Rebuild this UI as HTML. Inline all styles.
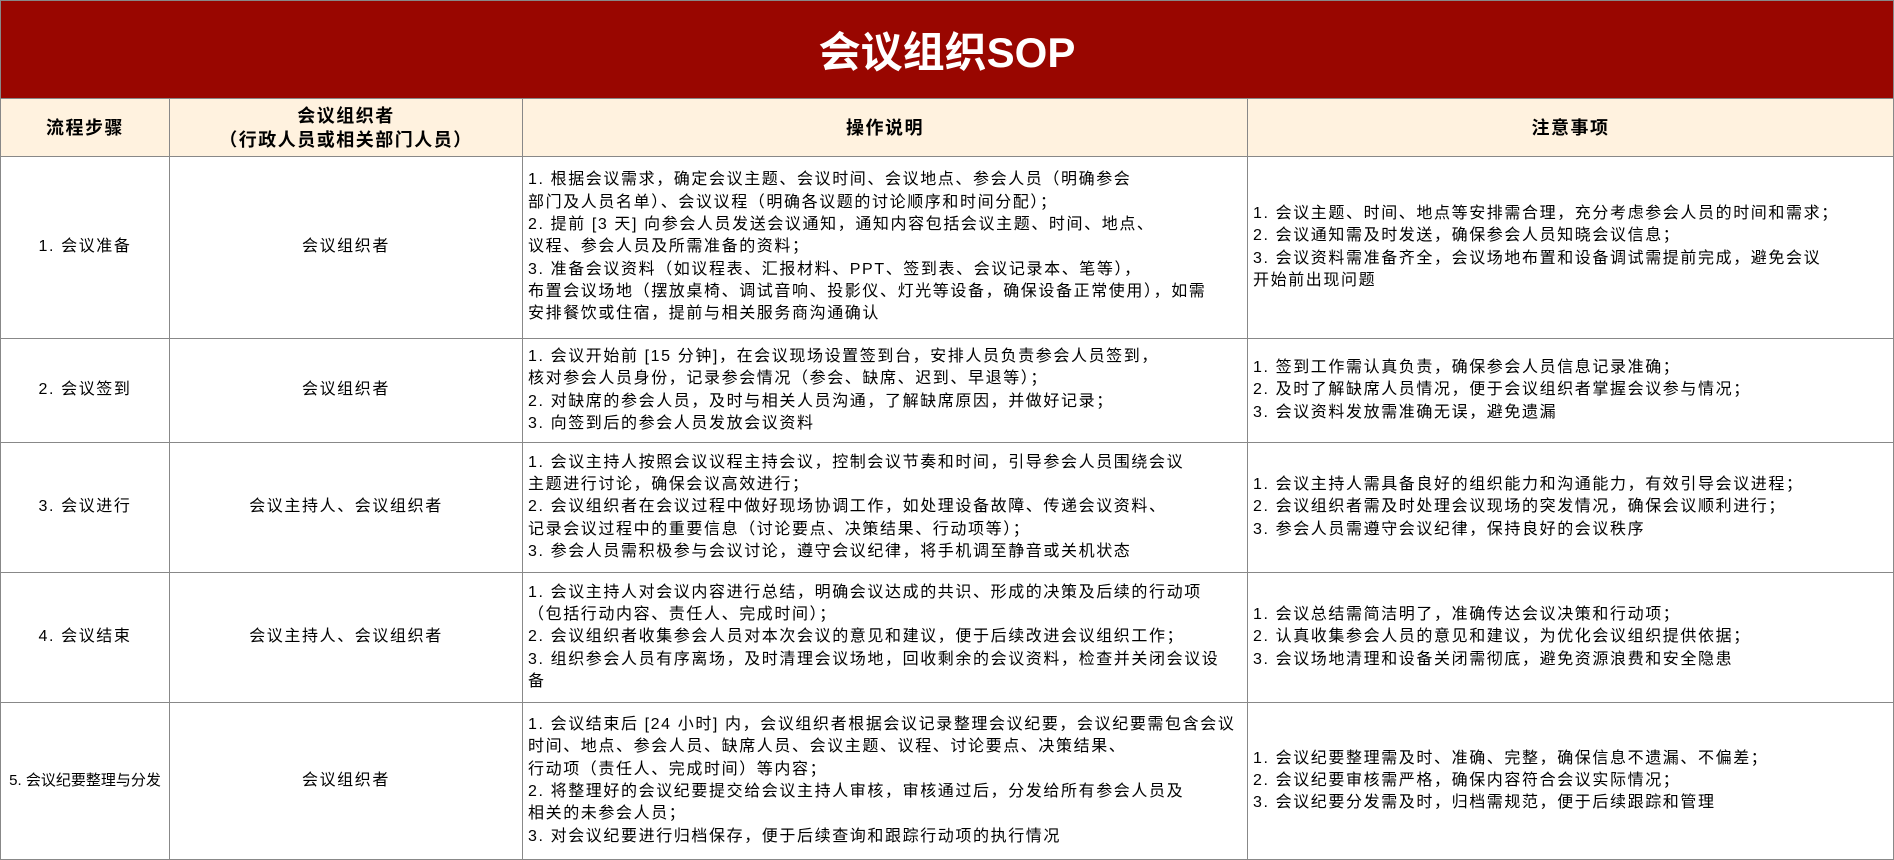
<!DOCTYPE html>
<html><head><meta charset="utf-8"><style>
*{margin:0;padding:0;box-sizing:border-box}
body{width:1894px;height:860px;background:#fff;font-family:"Liberation Sans","Noto Sans CJK SC",sans-serif;position:relative;overflow:hidden;color:#000}
.title{position:absolute;left:0;top:0;width:1894px;height:99px;background:#990600;color:#fff;font-weight:bold;font-size:42px;display:flex;align-items:center;justify-content:center;border:1px solid #888}
.c{position:absolute;border-right:1.5px solid #888;border-bottom:1.5px solid #888;display:flex;align-items:center;font-size:16px;letter-spacing:1.6px;line-height:22.3px;white-space:nowrap}
.ctr{justify-content:center;text-align:center}
.l{padding-left:5px}
.h{background:#fff2df;font-weight:bold;font-size:18px;letter-spacing:1.5px;line-height:24px}
</style></head><body>
<div class="title">会议组织SOP</div>
<div class="c ctr h" style="left:0;top:99px;width:170px;height:58px;border-left:1.5px solid #888">流程步骤</div>
<div class="c ctr h" style="left:170px;top:99px;width:353px;height:58px">会议组织者<br>（行政人员或相关部门人员）</div>
<div class="c ctr h" style="left:523px;top:99px;width:725px;height:58px">操作说明</div>
<div class="c ctr h" style="left:1248px;top:99px;width:646px;height:58px">注意事项</div>

<div class="c ctr" style="left:0;top:157px;width:170px;height:182px;border-left:1.5px solid #888">1. 会议准备</div>
<div class="c ctr" style="left:170px;top:157px;width:353px;height:182px">会议组织者</div>
<div class="c l" style="left:523px;top:157px;width:725px;height:182px"><div>1. 根据会议需求，确定会议主题、会议时间、会议地点、参会人员（明确参会<br>部门及人员名单）、会议议程（明确各议题的讨论顺序和时间分配）；<br>2. 提前 [3 天] 向参会人员发送会议通知，通知内容包括会议主题、时间、地点、<br>议程、参会人员及所需准备的资料；<br>3. 准备会议资料（如议程表、汇报材料、PPT、签到表、会议记录本、笔等），<br>布置会议场地（摆放桌椅、调试音响、投影仪、灯光等设备，确保设备正常使用），如需<br>安排餐饮或住宿，提前与相关服务商沟通确认</div></div>
<div class="c l" style="left:1248px;top:157px;width:646px;height:182px"><div>1. 会议主题、时间、地点等安排需合理，充分考虑参会人员的时间和需求；<br>2. 会议通知需及时发送，确保参会人员知晓会议信息；<br>3. 会议资料需准备齐全，会议场地布置和设备调试需提前完成，避免会议<br>开始前出现问题</div></div>

<div class="c ctr" style="left:0;top:339px;width:170px;height:104px;border-left:1.5px solid #888">2. 会议签到</div>
<div class="c ctr" style="left:170px;top:339px;width:353px;height:104px">会议组织者</div>
<div class="c l" style="left:523px;top:339px;width:725px;height:104px"><div>1. 会议开始前 [15 分钟]，在会议现场设置签到台，安排人员负责参会人员签到，<br>核对参会人员身份，记录参会情况（参会、缺席、迟到、早退等）；<br>2. 对缺席的参会人员，及时与相关人员沟通，了解缺席原因，并做好记录；<br>3. 向签到后的参会人员发放会议资料</div></div>
<div class="c l" style="left:1248px;top:339px;width:646px;height:104px"><div>1. 签到工作需认真负责，确保参会人员信息记录准确；<br>2. 及时了解缺席人员情况，便于会议组织者掌握会议参与情况；<br>3. 会议资料发放需准确无误，避免遗漏</div></div>

<div class="c ctr" style="left:0;top:443px;width:170px;height:130px;border-left:1.5px solid #888">3. 会议进行</div>
<div class="c ctr" style="left:170px;top:443px;width:353px;height:130px">会议主持人、会议组织者</div>
<div class="c l" style="left:523px;top:443px;width:725px;height:130px"><div>1. 会议主持人按照会议议程主持会议，控制会议节奏和时间，引导参会人员围绕会议<br>主题进行讨论，确保会议高效进行；<br>2. 会议组织者在会议过程中做好现场协调工作，如处理设备故障、传递会议资料、<br>记录会议过程中的重要信息（讨论要点、决策结果、行动项等）；<br>3. 参会人员需积极参与会议讨论，遵守会议纪律，将手机调至静音或关机状态</div></div>
<div class="c l" style="left:1248px;top:443px;width:646px;height:130px"><div>1. 会议主持人需具备良好的组织能力和沟通能力，有效引导会议进程；<br>2. 会议组织者需及时处理会议现场的突发情况，确保会议顺利进行；<br>3. 参会人员需遵守会议纪律，保持良好的会议秩序</div></div>

<div class="c ctr" style="left:0;top:573px;width:170px;height:130px;border-left:1.5px solid #888">4. 会议结束</div>
<div class="c ctr" style="left:170px;top:573px;width:353px;height:130px">会议主持人、会议组织者</div>
<div class="c l" style="left:523px;top:573px;width:725px;height:130px"><div>1. 会议主持人对会议内容进行总结，明确会议达成的共识、形成的决策及后续的行动项<br>（包括行动内容、责任人、完成时间）；<br>2. 会议组织者收集参会人员对本次会议的意见和建议，便于后续改进会议组织工作；<br>3. 组织参会人员有序离场，及时清理会议场地，回收剩余的会议资料，检查并关闭会议设<br>备</div></div>
<div class="c l" style="left:1248px;top:573px;width:646px;height:130px"><div>1. 会议总结需简洁明了，准确传达会议决策和行动项；<br>2. 认真收集参会人员的意见和建议，为优化会议组织提供依据；<br>3. 会议场地清理和设备关闭需彻底，避免资源浪费和安全隐患</div></div>

<div class="c ctr" style="left:0;top:703px;width:170px;height:157px;border-left:1.5px solid #888;letter-spacing:0;font-size:15px">5. 会议纪要整理与分发</div>
<div class="c ctr" style="left:170px;top:703px;width:353px;height:157px">会议组织者</div>
<div class="c l" style="left:523px;top:703px;width:725px;height:157px"><div>1. 会议结束后 [24 小时] 内，会议组织者根据会议记录整理会议纪要，会议纪要需包含会议<br>时间、地点、参会人员、缺席人员、会议主题、议程、讨论要点、决策结果、<br>行动项（责任人、完成时间）等内容；<br>2. 将整理好的会议纪要提交给会议主持人审核，审核通过后，分发给所有参会人员及<br>相关的未参会人员；<br>3. 对会议纪要进行归档保存，便于后续查询和跟踪行动项的执行情况</div></div>
<div class="c l" style="left:1248px;top:703px;width:646px;height:157px"><div>1. 会议纪要整理需及时、准确、完整，确保信息不遗漏、不偏差；<br>2. 会议纪要审核需严格，确保内容符合会议实际情况；<br>3. 会议纪要分发需及时，归档需规范，便于后续跟踪和管理</div></div>
</body></html>
